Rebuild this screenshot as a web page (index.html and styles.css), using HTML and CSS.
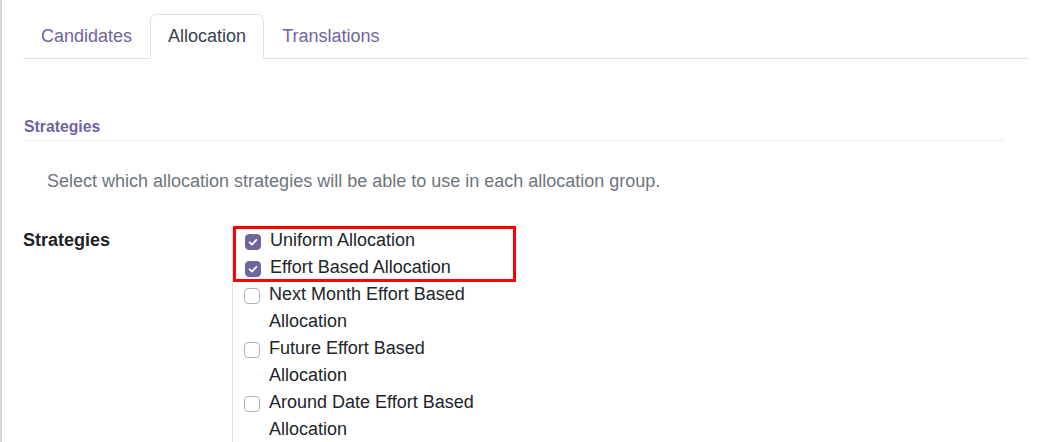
FILE: index.html
```html
<!DOCTYPE html>
<html>
<head>
<meta charset="utf-8">
<link rel="stylesheet" href="styles.css">
</head>
<body>
<div class="sheet">
  <ul class="tabs">
    <li class="tab">Candidates</li>
    <li class="tab active">Allocation</li>
    <li class="tab">Translations</li>
  </ul>
  <div class="pane">
    <div class="separator">Strategies</div>
    <p class="hint">Select which allocation strategies will be able to use in each allocation group.</p>
    <div class="field-row">
      <div class="label">Strategies</div>
      <div class="field">
        <div class="highlight">
          <label class="check"><span class="box on"><svg viewBox="0 0 16 16" width="16" height="16"><path d="M4.6 8.3 L7 10.6 L11.4 5.8" fill="none" stroke="#fff" stroke-width="1.8" stroke-linecap="round" stroke-linejoin="round"/></svg></span><span class="text">Uniform Allocation</span></label>
          <label class="check"><span class="box on"><svg viewBox="0 0 16 16" width="16" height="16"><path d="M4.6 8.3 L7 10.6 L11.4 5.8" fill="none" stroke="#fff" stroke-width="1.8" stroke-linecap="round" stroke-linejoin="round"/></svg></span><span class="text">Effort Based Allocation</span></label>
        </div>
        <label class="check"><span class="box"></span><span class="text">Next Month Effort Based Allocation</span></label>
        <label class="check"><span class="box"></span><span class="text">Future Effort Based Allocation</span></label>
        <label class="check"><span class="box"></span><span class="text">Around Date Effort Based Allocation</span></label>
      </div>
    </div>
  </div>
</div>
</body>
</html>
```
FILE: styles.css
```css
html, body {
  margin: 0;
  padding: 0;
  background: #fff;
  height: 100%;
  overflow: hidden;
}
body {
  font-family: "Liberation Sans", Arial, sans-serif;
  font-size: 18px;
  line-height: 1.5;
  color: #212529;
}
.sheet {
  border-left: 2px solid #d9d6e4;
  height: 100%;
  box-sizing: border-box;
  padding: 14px 18px 0 21px;
}
.tabs {
  list-style: none;
  margin: 0;
  padding: 0;
  display: flex;
  border-bottom: 1px solid #dee2e6;
}
.tab {
  padding: 8px 17px;
  border: 1px solid transparent;
  border-top-left-radius: 6px;
  border-top-right-radius: 6px;
  margin-bottom: -1px;
  color: #71639e;
}
.tab.active {
  color: #374151;
  border-color: #dee2e6 #dee2e6 #fff;
  background: #fff;
}
.pane {
  padding-right: 24px;
}
.separator {
  margin-top: 56px;
  margin-left: 1px;
  font-size: 15.75px;
  font-weight: bold;
  color: #71639e;
  padding-bottom: 1px;
  border-bottom: 1px solid #f0f0f0;
}
.hint {
  margin: 27px 0 0 24px;
  color: #6c757d;
}
.field-row {
  display: flex;
  margin-top: 32px;
}
.label {
  width: 209px;
  font-weight: bold;
  color: #1f2328;
}
.field {
  width: 282px;
  border-left: 1px solid #dee2e6;
}
.highlight {
  outline: 3px solid #ff0000;
  outline-offset: -2px;
  margin-left: 1px;
}
.check {
  display: flex;
  align-items: flex-start;
  padding-left: 11px;
  padding-right: 40px;
}
.box {
  flex: none;
  width: 16px;
  height: 16px;
  box-sizing: border-box;
  border: 1px solid #adb5bd;
  border-radius: 4px;
  margin-top: 7px;
  margin-right: 9px;
  background: #fff;
  display: flex;
}
.box.on {
  background: #71639e;
  border-color: #71639e;
}
.box svg {
  margin: -1px;
}
.text {
  color: #212529;
}
```
